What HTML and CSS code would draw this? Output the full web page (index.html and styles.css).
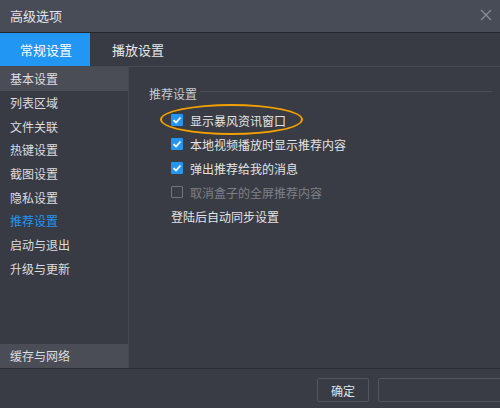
FILE: index.html
```html
<!DOCTYPE html>
<html lang="zh-CN">
<head>
<meta charset="utf-8">
<title>高级选项</title>
<link rel="stylesheet" href="styles.css">
</head>
<body>
<div class="window">
  <div class="titlebar">
    <span class="title">高级选项</span>
    <svg class="close" width="12" height="12" viewBox="0 0 12 12"><path d="M1 1L11 11M11 1L1 11" stroke="#8a8d94" stroke-width="1.3" fill="none"/></svg>
  </div>
  <div class="tabs">
    <div class="tab active">常规设置</div>
    <div class="tab">播放设置</div>
  </div>
  <div class="main">
    <div class="sidebar">
      <div class="item selected">基本设置</div>
      <div class="item">列表区域</div>
      <div class="item">文件关联</div>
      <div class="item">热键设置</div>
      <div class="item">截图设置</div>
      <div class="item">隐私设置</div>
      <div class="item current">推荐设置</div>
      <div class="item">启动与退出</div>
      <div class="item">升级与更新</div>
      <div class="item selected bottom">缓存与网络</div>
    </div>
    <div class="content">
      <div class="group-head"><span>推荐设置</span><div class="rule"></div></div>
      <div class="rows">
        <div class="row highlight"><span class="cb on"><svg width="10" height="10" viewBox="0 0 10 10"><path d="M1.5 5.2L4 7.5L8.5 2.5" stroke="#fff" stroke-width="1.8" fill="none"/></svg></span>显示暴风资讯窗口<span class="ring"></span></div>
        <div class="row"><span class="cb on"><svg width="10" height="10" viewBox="0 0 10 10"><path d="M1.5 5.2L4 7.5L8.5 2.5" stroke="#fff" stroke-width="1.8" fill="none"/></svg></span>本地视频播放时显示推荐内容</div>
        <div class="row"><span class="cb on"><svg width="10" height="10" viewBox="0 0 10 10"><path d="M1.5 5.2L4 7.5L8.5 2.5" stroke="#fff" stroke-width="1.8" fill="none"/></svg></span>弹出推荐给我的消息</div>
        <div class="row disabled"><span class="cb off"></span>取消盒子的全屏推荐内容</div>
        <div class="row plain">登陆后自动同步设置</div>
      </div>
    </div>
  </div>
  <div class="footer">
    <div class="btn">确定</div>
    <div class="btn wide"></div>
  </div>
</div>
</body>
</html>
```
FILE: styles.css
```css
html, body {
  margin: 0;
  padding: 0;
  background: #393c44;
}
body {
  font-family: "Noto Sans CJK SC", "Noto Sans", sans-serif;
  color: #dcdde0;
  overflow: hidden;
}
.window {
  width: 500px;
  height: 408px;
  display: flex;
  flex-direction: column;
  overflow: hidden;
}
.titlebar {
  height: 32px;
  background: #484c56;
  border-bottom: 1px solid #24262b;
  display: flex;
  align-items: center;
  justify-content: space-between;
  padding: 0 8px 2px 10px;
  box-sizing: border-box;
  height: 33px;
  flex: none;
}
.title {
  font-size: 13px;
  color: #e2e3e6;
}
.tabs {
  height: 33px;
  background: #383b43;
  border-bottom: 1px solid #464950;
  display: flex;
  flex: none;
}
.tab {
  width: 90px;
  display: flex;
  align-items: center;
  justify-content: center;
  font-size: 13px;
  color: #e6e7ea;
  padding-left: 2px;
  box-sizing: border-box;
}
.tab.active {
  background: #2196f3;
  color: #fff;
}
.tab + .tab {
  width: 96px;
  padding-left: 0;
}
.main {
  height: 301px;
  display: flex;
  flex: none;
}
.sidebar {
  width: 128px;
  border-right: 1px solid #44474e;
  display: flex;
  flex-direction: column;
  background: #383b43;
}
.item {
  height: 24px;
  line-height: 24px;
  padding-left: 10px;
  font-size: 12px;
  color: #dcdde0;
  flex: none;
}
.item + .item {
  height: 23.7px;
}
.item.selected {
  background: #4a4d55;
}
.item.current {
  color: #2196f3;
}
.item.bottom {
  margin-top: auto;
  height: 24px;
}
.content {
  flex: 1;
  padding: 16px 8px 0 20px;
  font-size: 12px;
}
.group-head {
  display: flex;
  align-items: center;
  height: 20px;
  color: #c9cacd;
  margin-bottom: 5px;
}
.group-head span {
  margin-top: 1px;
}
.rule {
  flex: 1;
  height: 1px;
  background: #4b4e56;
  margin-left: 3px;
  margin-top: -3px;
}
.rows {
  padding-left: 22px;
}
.row {
  position: relative;
  height: 24px;
  display: flex;
  align-items: center;
  color: #e2e3e6;
}
.row.disabled {
  color: #7d8087;
}
.cb {
  width: 12px;
  height: 12px;
  box-sizing: border-box;
  margin-right: 7px;
  display: flex;
  align-items: center;
  justify-content: center;
  border-radius: 1px;
}
.cb.on {
  background: #2196f3;
}
.cb.off {
  border: 1px solid #71747b;
}
.ring {
  position: absolute;
  left: -11px;
  top: -4px;
  width: 143px;
  height: 31px;
  box-sizing: border-box;
  border: 2px solid #f0a000;
  border-radius: 50%;
  pointer-events: none;
}
.footer {
  flex: 1;
  border-top: 1px solid #2a2c31;
  background: #393c44;
  display: flex;
  align-items: flex-start;
  padding: 9px 0 0 317px;
  gap: 9px;
}
.btn {
  height: 24px;
  width: 52px;
  box-sizing: border-box;
  border: 1px solid #52555c;
  border-radius: 2px;
  display: flex;
  align-items: center;
  justify-content: center;
  font-size: 12px;
  color: #e2e3e6;
  flex: none;
}
.btn.wide {
  width: 130px;
}
```
